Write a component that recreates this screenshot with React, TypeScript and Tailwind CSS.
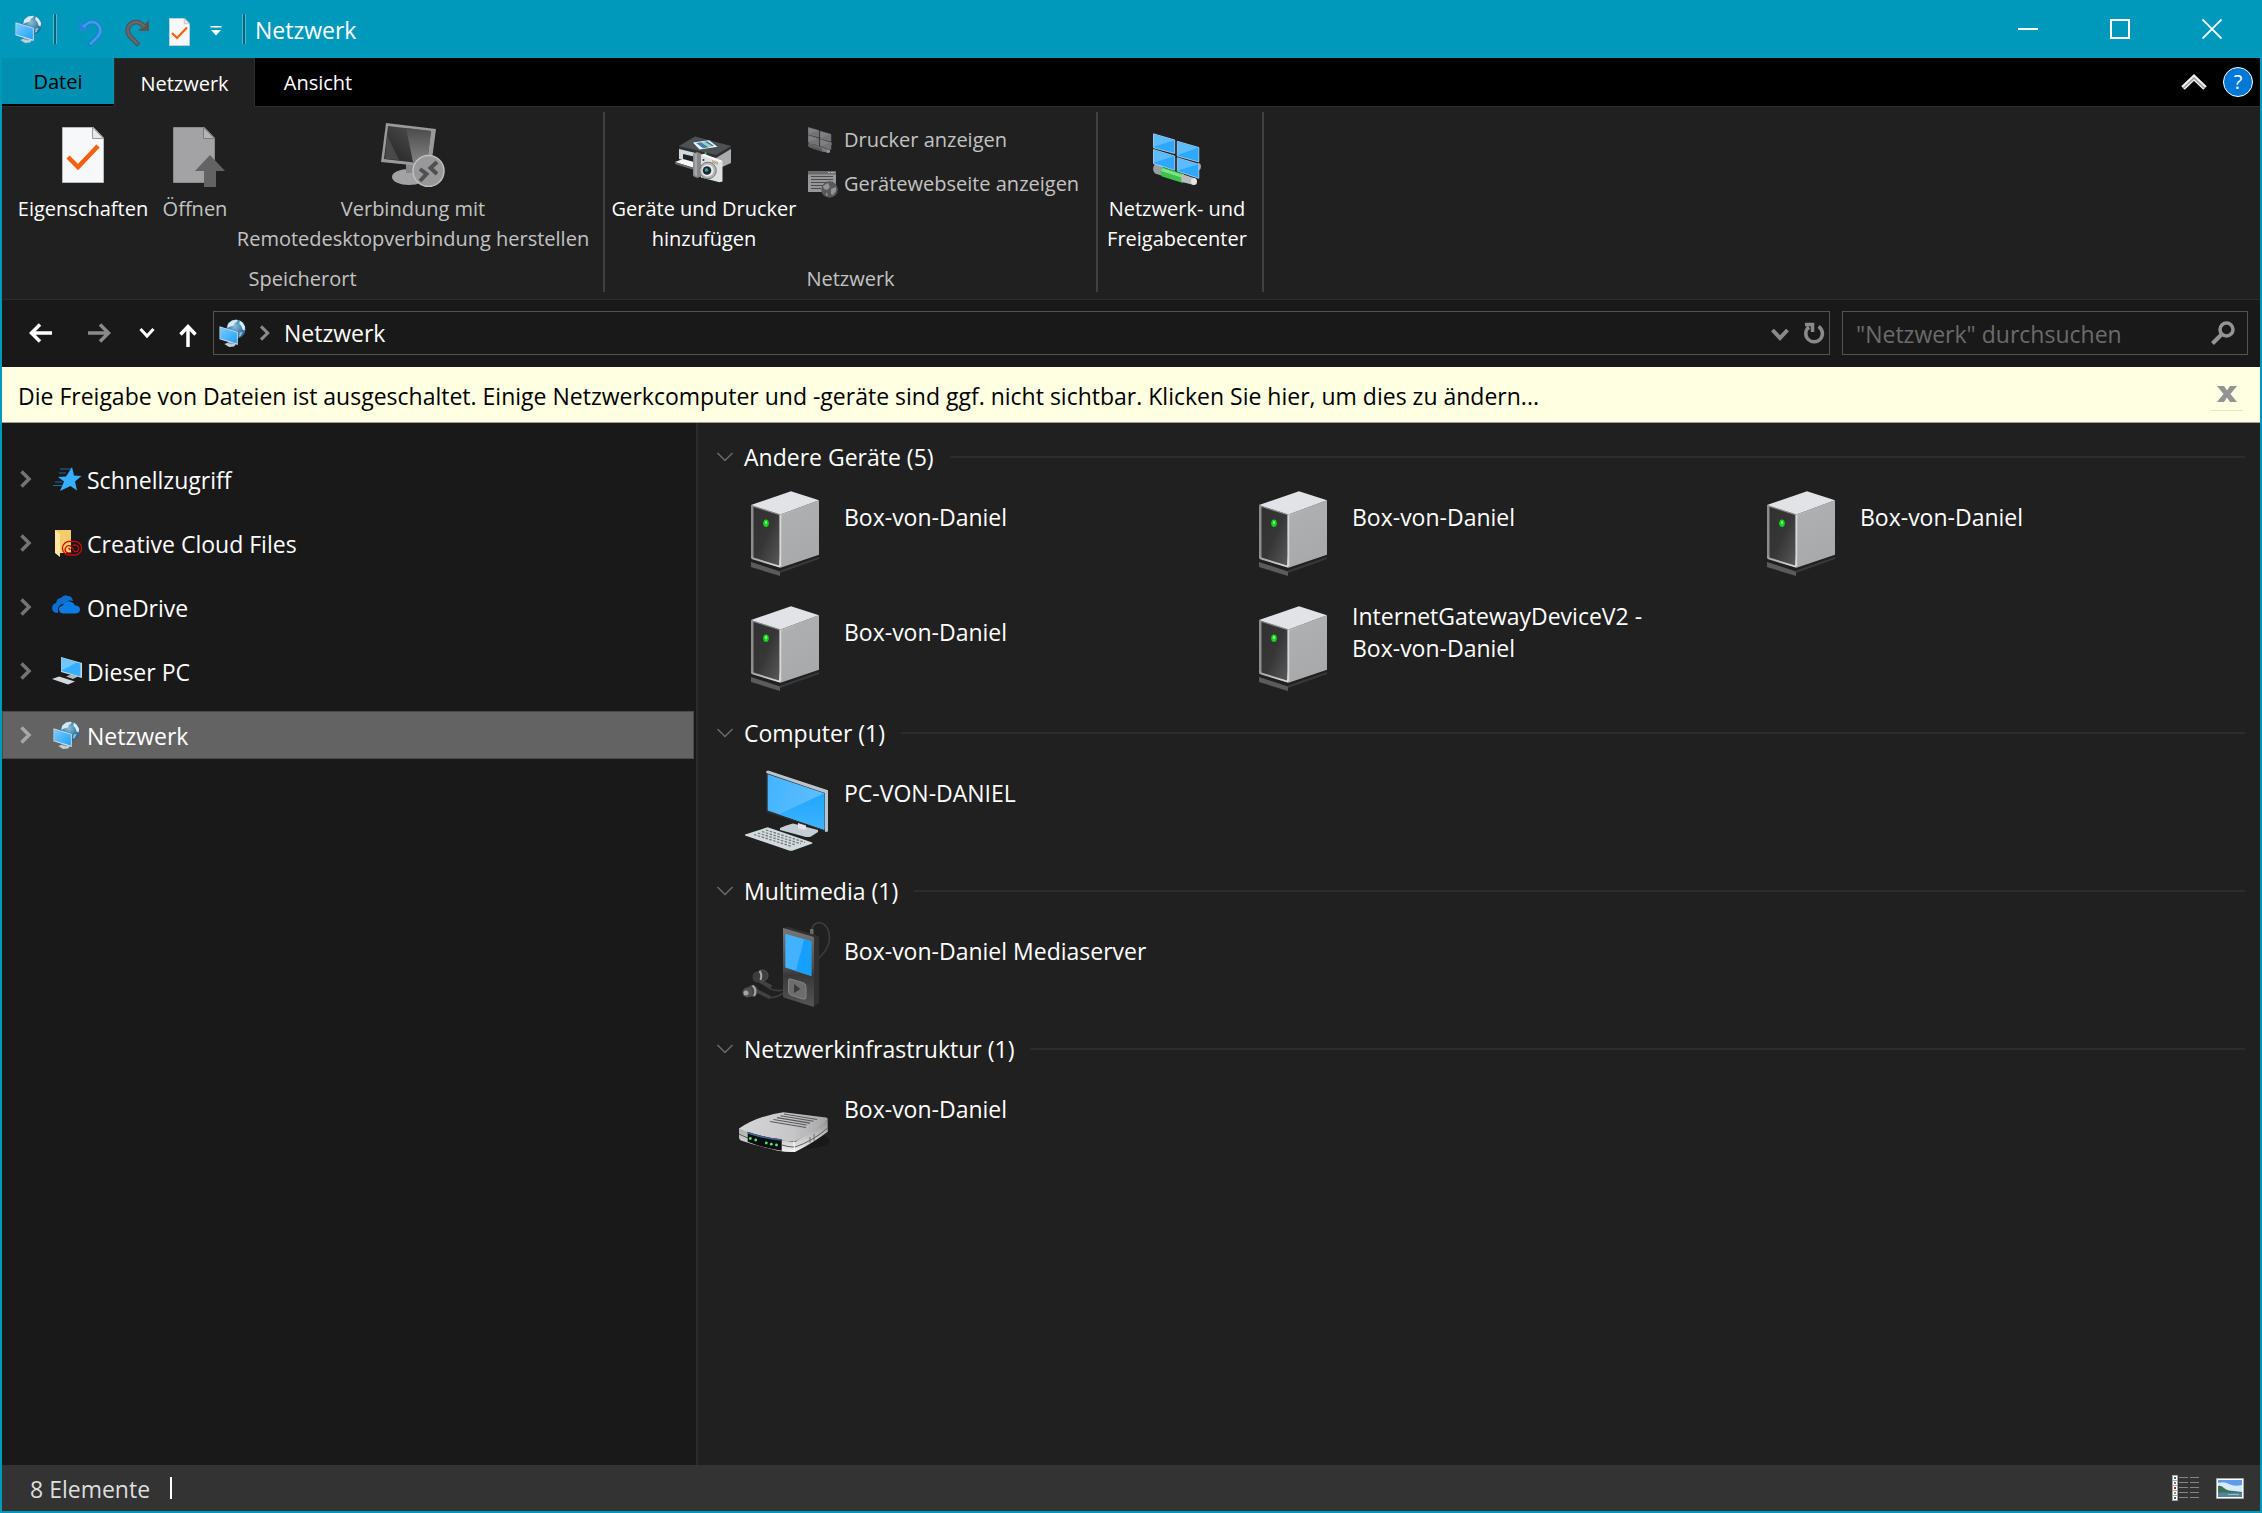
import React, { useState } from 'react';

type IconProps = { className?: string };

const NetworkIcon = ({ className = 'w-7 h-7' }: IconProps) => (
  <svg viewBox="0 0 28 29" className={className} aria-hidden="true">
    <defs>
      <radialGradient id="globe" cx="0.45" cy="0.35" r="0.7">
        <stop offset="0" stopColor="#8fbdd6" />
        <stop offset="0.5" stopColor="#4487ae" />
        <stop offset="1" stopColor="#1f5c85" />
      </radialGradient>
      <linearGradient id="netscreen" x1="0" y1="0" x2="1" y2="1">
        <stop offset="0" stopColor="#7fcbff" />
        <stop offset="1" stopColor="#1ba1ff" />
      </linearGradient>
    </defs>
    <circle cx="17" cy="10.500" r="10" fill="url(#globe)" />
    <path d="M9 5l4-3.500 5-.8 1 1.500-3 2-1 2.500-4 1-3 1.500z" fill="#d3e9f3" />
    <path d="M21 1.500l3 2.500 2.500 4-.5 4-2-1-1.500-4-2-2z" fill="#d9edf5" />
    <path d="M21 14l3-.5-2 4-2 1z" fill="#8fc0d9" />
    <path d="M5 26l5-2 7 2.500-2 2-5 .5z" fill="#c4d0d8" />
    <path d="M9 22l4 1.500v3l-4-1z" fill="#8e9ba4" />
    <path d="M0 7.500l19 6v13.500L0 21z" fill="#d4dde3" />
    <path d="M.7 8.500l17.300 5.500v11.500L.7 20.200z" fill="url(#netscreen)" />
  </svg>
);

const PageCheckIcon = ({ className }: IconProps) => (
  <svg viewBox="0 0 42 56" className={className} aria-hidden="true">
    <path d="M.5.5h31L41.500 11v44.500H.5z" fill="#f7f8f9" stroke="#b9b9b9" />
    <path d="M30.500.5V11.500H41.500z" fill="#e6e8ea" stroke="#9b9b9b" />
    <path d="M6 30l10 10L36 19" fill="none" stroke="#f4600c" strokeWidth="4.500" />
  </svg>
);

const UndoIcon = () => (
  <svg viewBox="0 0 24 28" className="w-6 h-7" aria-hidden="true">
    <path d="M4.500 8Q8.500 3 13 3a8.300 8.300 0 0 1 8.300 8.500q0 3.500-3 6.500L10.500 26" fill="none" stroke="#1f74cb" strokeWidth="4.600" />
    <path d="M0 1v11h11z" fill="#2583da" />
    <path d="M4.500 8Q8.500 3 13 3a8.300 8.300 0 0 1 8.300 8.500q0 3.500-3 6.500L11 25.500" fill="none" stroke="#3d9bea" strokeWidth="3" />
  </svg>
);

const RedoIcon = () => (
  <svg viewBox="0 0 24 28" className="w-6 h-7" aria-hidden="true">
    <path d="M19.500 8Q15.500 3 11 3a8.300 8.300 0 0 0-8.300 8.500q0 3.500 3 6.500l7.800 8" fill="none" stroke="#4a4a4a" strokeWidth="4.600" />
    <path d="M24 1v11H13z" fill="#555" />
    <path d="M19.500 8Q15.500 3 11 3a8.300 8.300 0 0 0-8.300 8.500q0 3.500 3 6.500l7.300 7.500" fill="none" stroke="#666" strokeWidth="3" />
  </svg>
);

const OpenIcon = () => (
  <svg viewBox="0 0 52 60" className="w-[52px] h-[60px]" aria-hidden="true">
    <path d="M.5.5h31L41.500 11v44.500H.5z" fill="#a3a3a5" stroke="#8a8a8a" />
    <path d="M30.500.5V11.500H41.500z" fill="#b4b4b4" stroke="#7c7c7c" />
    <path d="M37 28l15 16h-9v16H31V44h-9z" fill="#636363" />
  </svg>
);

const RemoteIcon = () => (
  <svg viewBox="0 0 64 64" className="w-16 h-16" aria-hidden="true">
    <defs>
      <linearGradient id="remote" x1="0" y1="1" x2="1" y2="0">
        <stop offset="0" stopColor="#222" />
        <stop offset="1" stopColor="#555" />
      </linearGradient>
      <linearGradient id="remoteglare" x1="0" y1="0" x2="0" y2="1">
        <stop offset="0" stopColor="#4b4b4b" />
        <stop offset="1" stopColor="#858587" />
      </linearGradient>
    </defs>
    <ellipse cx="28" cy="54" rx="17" ry="8" fill="#a2a2a4" />
    <path d="M25 40h11l-2 10H25z" fill="#88888a" />
    <path d="M5 0l50 6-5 38L0 39z" fill="#9a9a9c" />
    <path d="M7 3l43 5-4 33L3 36z" fill="url(#remote)" />
    <path d="M25 5l25 3-4 33-14-2z" fill="url(#remoteglare)" />
    <path d="M6 12l12 25-14-1z" fill="#4a4a4a" />
    <circle cx="47.500" cy="48" r="15.500" fill="#98989a" stroke="#c0c0c0" strokeWidth="1.500" />
    <path d="M39 46l6.500 5-6.500 7M56 39l-6.500 6 6.500 6" fill="none" stroke="#505050" strokeWidth="4" />
  </svg>
);

const PrinterCameraIcon = () => (
  <svg viewBox="0 0 58 47" className="w-[58px] h-[47px]" aria-hidden="true">
    <path d="M4 10l37 9v12L4 23z" fill="#d5d7d9" />
    <path d="M40.500 19L56 10v17l-15.500 7z" fill="#aaacae" />
    <path d="M4 10L20 .5 56 10v3l-15 9L4 13z" fill="#2d3134" />
    <path d="M4 10L20 .5 56 10l-15 9z" fill="#4b5155" />
    <path d="M18 6.500l16-2.300 8.500 6.500-18 2.800z" fill="#f0f6fb" />
    <path d="M21 7l5-.8 8 5-6 1zM29 5.800l3.500-.5 6.500 4.500-2 .5z" fill="#3f7fb8" />
    <path d="M26 6.200l3-.4 8 4.600-3 .8z" fill="#9fd0a0" />
    <path d="M8 18l11 2.500v9L8 26z" fill="#1f2327" />
    <path d="M0 26l8-3 11 3v6z" fill="#f4f6f7" />
    <path d="M0 26l19 6v2L0 28z" fill="#686c70" />
    <path d="M29.500 16.500h2v5h-2z" fill="#3fca45" />
    <path d="M18 18l4-2 4 1.500v23l-4 1.500-4-2z" fill="#85878a" />
    <path d="M19.500 18l2.500-1v23l-2.500-1z" fill="#a5a7aa" />
    <path d="M26 19l3-1 18.500 7v20.500l-3 .8L26 41.500z" fill="#dfe0e1" />
    <path d="M26 19l3-1 18.500 7-2.500 1z" fill="#fafafa" />
    <path d="M37 24l6 2v3l-6-2z" fill="#bcb397" />
    <circle cx="28.500" cy="24" r="1" fill="#333" />
    <circle cx="33" cy="34.500" r="8.300" fill="#b4b6b8" stroke="#74777a" />
    <circle cx="32.500" cy="34.500" r="6" fill="#ebecec" />
    <circle cx="32" cy="34.500" r="4.300" fill="#20282b" />
    <circle cx="31.500" cy="34" r="1.800" fill="#38a4a2" />
  </svg>
);

const PanesIcon = ({ className, muted }: IconProps & { muted?: boolean }) => (
  <svg viewBox="0 0 48 52" className={className} aria-hidden="true">
    <path d="M2 31l8 2v10l-8-2.500q-4-5 0-9.500z" fill={muted ? '#636365' : '#9c9fa1'} />
    <path d="M45 30q3 0 3 3.500t-3 4z" fill={muted ? '#636365' : '#9c9fa1'} />
    <path d="M9 34l22 7-1 9L9 43.500q-3-5 0-9.500z" fill={muted ? '#59595b' : '#3fc24d'} />
    <path d="M9 35l21 7v3L8 38z" fill={muted ? '#6b6b6d' : '#7be388'} />
    <path d="M29 41l12 4v7l-12-3q-2-4 0-8z" fill={muted ? '#7a7a7c' : '#b9bdbe'} />
    <ellipse cx="41" cy="48.500" rx="3" ry="3.500" fill={muted ? '#9a9a9c' : '#e3e5e6'} />
    <g fill={muted ? '#737375' : '#2ea8ff'} stroke={muted ? '#909092' : '#b5dcf8'} strokeWidth=".8">
      <path d="M.5.800l21.200 6.200v13.500L.5 14.800z" />
      <path d="M24.300 8.300l21.500 6.200v14.500l-21.500-6z" />
      <path d="M.5 16.500l21.200 6.500v14.300L.5 30.700z" />
      <path d="M24.300 24.700l21.500 6.600v14l-21.500-7.300z" />
    </g>
    <path d="M1 1.500l20 6L1 13.500zM25 9l19 6-19 7zM1 17.500l19 6-19 6zM25 25.500l19 6-19 6z" fill={muted ? '#808082' : '#5cbcff'} />
  </svg>
);

const WebpageIcon = () => (
  <svg viewBox="0 0 30 27" className="w-[30px] h-[27px]" aria-hidden="true">
    <path d="M0 0h28v21H0z" fill="#97979a" />
    <path d="M0 0h28v3.500H0z" fill="#6a6a6c" />
    <path d="M20 1.500h2M23 1.500h2M25.500 1.500h1.500" stroke="#bbb" />
    <path d="M3 5.500h22M3 8.500h22M3 11.500h22M3 14.500h14M3 17.500h10" stroke="#4a4a4c" strokeWidth="1.200" />
    <circle cx="21.500" cy="18.500" r="8.300" fill="#59595b" />
    <path d="M15 15l5-3 2 4-3 3-3-1zM23 18l5-2v4l-3 4-2-1zM18 21l2 3-2 1z" fill="#949496" />
  </svg>
);

const Chevron = ({ className = 'w-3 h-[18px]' }: IconProps) => (
  <svg viewBox="0 0 12 18" className={className} fill="none" stroke="currentColor" strokeWidth="3.500" aria-hidden="true">
    <path d="M1.500 1.500L9 9l-7.500 7.500" />
  </svg>
);

const StarIcon = () => (
  <svg viewBox="0 0 30 28" className="w-[30px] h-7" aria-hidden="true">
    <path d="M20 2l2 8.500 7.500.5-6.500 5.500 2 9-6.500-4.500L8 26l4-9.500-6-4.500 8-.5z" fill="#35aeff" />
    <path d="M8 4h11M7 8h7M3 17h7M1 20.500h9" stroke="#1f6d9f" strokeWidth="1.200" />
  </svg>
);

const CreativeCloudIcon = () => (
  <svg viewBox="0 0 30 28" className="w-[30px] h-7" aria-hidden="true">
    <path d="M3 1h16v23H6z" fill="#f5cc6b" />
    <path d="M3 1l5 4v23l-5-4z" fill="#ffe5a0" />
    <path d="M18 12.500a6.800 6.800 0 1 0 0 13.500h4a6.800 6.800 0 1 0 0-13.500z" fill="none" stroke="#c90b0b" strokeWidth="1.300" />
    <path d="M19.500 23.500c-5 1.500-7.500-1.500-6-4.500s5-3 6.500-.5l2.500 4c3 1 4.500-1.500 4-4-1-2.500-3.500-3-6-2M18.500 21l-2-2" fill="none" stroke="#c90b0b" strokeWidth="1.300" />
  </svg>
);

const OneDriveIcon = () => (
  <svg viewBox="0 0 30 28" className="w-[30px] h-7" aria-hidden="true">
    <path d="M6 20q-6 0-6-5 0-4 4-5 1-5 5-5 3-4 7-2 4 0 5 5-6-2-9 3-5 0-6 5z" fill="#0a6fd0" />
    <path d="M11 20.500q-4-.5-4-4t4-4q2-5 7-4 4 1 5 4 5 0 5 4 0 3.500-4 4z" fill="#0a7ce4" />
  </svg>
);

const ThisPcIcon = () => (
  <svg viewBox="0 0 30 28" className="w-[30px] h-7" aria-hidden="true">
    <path d="M9 0l21 6v15L9 15z" fill="#cdd7de" />
    <path d="M9.700 1L28.500 6.500V19.500L9.700 14z" fill="#35aeff" />
    <path d="M9.700 1l15 4.500-15 8z" fill="#70c6ff" />
    <path d="M14 19.500l5-2 7 2-5 2.500z" fill="#aebbc3" />
    <path d="M0 22l7-2.500 16 5-7 3z" fill="#d3dadf" />
  </svg>
);

const ServerIcon = () => (
  <svg viewBox="0 0 96 100" className="w-24 h-[100px]" aria-hidden="true">
    <defs>
      <linearGradient id="serverFront" x1="0" y1="0" x2="1" y2="1">
        <stop offset="0" stopColor="#303030" />
        <stop offset="0.5" stopColor="#363636" />
        <stop offset="1" stopColor="#585858" />
      </linearGradient>
      <linearGradient id="serverSide" x1="0" y1="0" x2="0.300" y2="1">
        <stop offset="0" stopColor="#d6d7d9" />
        <stop offset="0.250" stopColor="#aeafb1" />
        <stop offset="1" stopColor="#a8a9ab" />
      </linearGradient>
      <linearGradient id="serverEdge" x1="0" y1="0" x2="0" y2="1">
        <stop offset="0" stopColor="#8b8b8d" />
        <stop offset="0.800" stopColor="#8d8d8f" />
        <stop offset="1" stopColor="#e8e8e8" />
      </linearGradient>
    </defs>
    <path d="M14 83l29 9.500V97L14 88z" fill="#5b5b5b" />
    <path d="M43 91.500L82 78v2L43 94z" fill="#383838" />
    <path d="M14 26l29.500 9.500v53.200L16 80.500q-2-.5-2-2z" fill="url(#serverEdge)" />
    <path d="M16.500 28L42 36v50.500l-25.500-8z" fill="url(#serverFront)" />
    <path d="M43.500 35.500L82 21.300v54.400L43.500 88.700z" fill="url(#serverSide)" />
    <path d="M14 26l40-13.700 28 9L43.500 35.500z" fill="#e2e3e7" />
    <path d="M43.500 35.500v52" stroke="#d8d8d8" strokeWidth="1.500" />
    <ellipse cx="29" cy="44.300" rx="2.800" ry="3.800" fill="#12d51c" />
    <ellipse cx="29" cy="43.500" rx="1.200" ry="1.800" fill="#74ff6b" />
  </svg>
);

const ComputerIcon = () => (
  <svg viewBox="0 0 96 100" className="w-24 h-[100px]" aria-hidden="true">
    <defs>
      <linearGradient id="pcScreen" x1="0" y1="0" x2="1" y2="0.300">
        <stop offset="0" stopColor="#43b3ff" />
        <stop offset="1" stopColor="#5dbeff" />
      </linearGradient>
      <linearGradient id="pcShade" x1="0" y1="0" x2="0" y2="1">
        <stop offset="0" stopColor="#1ea7ff" />
        <stop offset="1" stopColor="#3db3ff" />
      </linearGradient>
    </defs>
    <path d="M43 73q6-3 13-4.500l25 6.500v2l-7 4.500q-3 1-7 0L43 75z" fill="#c5ced4" />
    <path d="M61 68l8 2.500v4q-4 1-8-1.500z" fill="#e6e3e6" />
    <path d="M29.300 16.300L31 15.800 91 35.500v41l-3.500-.5L29.300 57z" fill="#2b3136" />
    <path d="M29.300 16.300L31 15.600 91 35.300v41.200l-3 .5V38L29.300 18z" fill="#b9c4cb" />
    <path d="M30.700 19.300l56.600 18.900v36.500L30.700 55.500z" fill="url(#pcScreen)" />
    <path d="M87.300 38.200v36.500L42 59.300z" fill="url(#pcShade)" />
    <path d="M8 79.500l22.700-7.200L75.300 87.500v1L56 95.500q-2 .5-4 0L8 80.500z" fill="#d3dade" />
    <path d="M17 79.500l38 12M21 78l38 12M25 76.500l39 12.300M29 75l39 12.300" stroke="#6d767c" strokeWidth="1.200" strokeDasharray="2.500 1.500" />
  </svg>
);

const MediaIcon = () => (
  <svg viewBox="0 0 96 100" className="w-24 h-[100px]" aria-hidden="true">
    <defs>
      <linearGradient id="playerBody" x1="0" y1="0" x2="0" y2="1">
        <stop offset="0" stopColor="#777" />
        <stop offset="0.500" stopColor="#4d4d4d" />
        <stop offset="0.600" stopColor="#383838" />
        <stop offset="1" stopColor="#555" />
      </linearGradient>
    </defs>
    <path d="M74.500 17q2-7.500 8-7.500 9.500 2 10 15 0 11-11 21M46 77q-7 2-14-2L20 67M46 80q-8 6-15 4L17 77" fill="none" stroke="#3d3d3d" strokeWidth="1.600" />
    <path d="M19 66l14 7M18 77l14 7" stroke="#424242" strokeWidth="3.500" strokeLinecap="round" />
    <path d="M73 16h3.500v8H73z" fill="#6a6a6a" />
    <path d="M46 15l5-1.300 29 8.800q2 1 2 3V90l-5 3.500z" fill="#303030" />
    <path d="M46 15l29.500 8.500q1.500.5 1.500 2V93q0 1-1.500.5L48 85q-2-.5-2-2z" fill="url(#playerBody)" />
    <path d="M48.300 20.700l26 7.600V63l-26-8.500z" fill="#42b1ff" />
    <path d="M74.300 28.300V63L59 58l8-31.800z" fill="#159fff" />
    <path d="M53.500 66l12 3.500q3.500 1 3.500 4V84q0 3-3 2l-11-3.500q-3.500-1-3.500-4V68q0-3 2-2z" fill="#6d6d6d" stroke="#858585" />
    <path d="M57 71l6.500 5-6.500 4z" fill="#3a3a3a" />
    <circle cx="25.500" cy="62.500" r="5.500" fill="#3e3e3e" stroke="#555" />
    <ellipse cx="20" cy="64" rx="4.500" ry="5.500" fill="#3c3c3c" />
    <path d="M22.500 58q3 3.500 1 9" fill="none" stroke="#aaa" strokeWidth="2" />
    <ellipse cx="15.500" cy="78" rx="5.500" ry="6" fill="#464646" />
    <path d="M15.500 72.500q5 4 1.500 10.500" fill="none" stroke="#aaa" strokeWidth="2" />
    <circle cx="10.500" cy="79.500" r="5" fill="#505050" />
    <circle cx="9" cy="80" r="2.500" fill="#a5a5a5" />
  </svg>
);

const RouterIcon = () => (
  <svg viewBox="0 0 96 100" className="w-24 h-[100px]" aria-hidden="true">
    <defs>
      <linearGradient id="routerTop" x1="0" y1="0" x2="1" y2="0">
        <stop offset="0" stopColor="#d6d6d8" />
        <stop offset="0.600" stopColor="#c6c6c8" />
        <stop offset="1" stopColor="#a5a5a7" />
      </linearGradient>
      <linearGradient id="routerSide" x1="0" y1="0" x2="0" y2="1">
        <stop offset="0" stopColor="#8f8f91" />
        <stop offset="1" stopColor="#f0f0f0" />
      </linearGradient>
    </defs>
    <ellipse cx="62" cy="70" rx="31" ry="8" fill="#181818" />
    <path d="M2 57q27 12 56 14l32.700-22.500v12.200Q76 72 58 81q-8 .5-18-1.500Q20 75 4 69.500q-2-1-2-3z" fill="url(#routerSide)" />
    <path d="M2 57.500Q20 45 46.300 41.300L89 46.500q2 .5 1.700 2Q76 62 58 70.500 26 70 2 57.500z" fill="url(#routerTop)" />
    <path d="M57 70.500v10" stroke="#f5f5f5" strokeWidth="1.500" />
    <path d="M58 76q18-6 32.500-19M2 63q4 2 9 4M45 74q6 2 12 2" fill="none" stroke="#59595b" />
    <path d="M10.700 60.700q16 6 34 7.500v11.500q-18-2.500-34-9z" fill="#0a0d12" />
    <path d="M10.700 60.700q16 6 34 7.500v1.500q-18-1.500-34-7z" fill="#42618d" />
    <path d="M47 43l33 5.500M43.500 44.800l33 5.500M40 46.600l33 5.500M36.500 48.500l33 5.500M33 50.500l36 6" stroke="#58585a" strokeWidth="1.100" />
    <g fill="#52e864">
      <circle cx="13.300" cy="67.500" r="1.400" />
      <circle cx="18.700" cy="69" r="1.400" />
      <circle cx="29.300" cy="72" r="1.400" />
      <circle cx="34.300" cy="73.200" r="1.400" />
      <circle cx="39.500" cy="74" r="1.400" />
    </g>
    <path d="M73 66v6M77 63v7" stroke="#6d6d6f" />
  </svg>
);

type RibbonButtonProps = {
  icon: React.ReactNode;
  lines: string[];
  className: string;
  disabled?: boolean;
};

const RibbonButton = ({ icon, lines, className, disabled }: RibbonButtonProps) => (
  <button
    type="button"
    disabled={disabled}
    className={`flex flex-col items-center whitespace-nowrap text-[20px] leading-[30px] ${disabled ? 'text-[#c3c3c3]' : 'text-white'} ${className}`}
  >
    <span className="flex h-[82px] items-center justify-center pt-1">{icon}</span>
    {lines.map((line) => (
      <span key={line} className="block">{line}</span>
    ))}
  </button>
);

const RibbonGroup = ({ label, children }: { label: string; children: React.ReactNode }) => (
  <div className="flex flex-col border-r-2 border-[#404040]">
    <div className="flex flex-1">{children}</div>
    <div className="h-[26px] text-center text-[20px] leading-[26px] text-[#c3c3c3]">{label}</div>
  </div>
);

const navItems = [
  { label: 'Schnellzugriff', icon: <StarIcon /> },
  { label: 'Creative Cloud Files', icon: <CreativeCloudIcon /> },
  { label: 'OneDrive', icon: <OneDriveIcon /> },
  { label: 'Dieser PC', icon: <ThisPcIcon /> },
  { label: 'Netzwerk', icon: <NetworkIcon className="w-[30px] h-7" /> }
];

const groups = [
  {
    title: 'Andere Geräte',
    icon: <ServerIcon />,
    items: [
      ['Box-von-Daniel'],
      ['Box-von-Daniel'],
      ['Box-von-Daniel'],
      ['Box-von-Daniel'],
      ['InternetGatewayDeviceV2 -', 'Box-von-Daniel']
    ]
  },
  { title: 'Computer', icon: <ComputerIcon />, items: [['PC-VON-DANIEL']] },
  { title: 'Multimedia', icon: <MediaIcon />, items: [['Box-von-Daniel Mediaserver']] },
  { title: 'Netzwerkinfrastruktur', icon: <RouterIcon />, items: [['Box-von-Daniel']] }
];

const TitleBar = () => (
  <header className="flex h-[58px] items-center bg-[#0099bc] pl-[13px] text-white">
    <NetworkIcon />
    <div className="ml-[10px] h-[30px] w-1 border-x border-[#4fb8d0] bg-[#08667c]"></div>
    <button type="button" aria-label="Rückgängig" className="ml-[22px] pt-2"><UndoIcon /></button>
    <button type="button" aria-label="Wiederholen" className="ml-[22px] pt-2"><RedoIcon /></button>
    <button type="button" aria-label="Eigenschaften" className="ml-5 pt-[6px]"><PageCheckIcon className="h-7 w-[21px]" /></button>
    <button type="button" aria-label="Symbolleiste anpassen" className="ml-5 pt-1">
      <svg viewBox="0 0 12 10" className="h-[10px] w-3" aria-hidden="true">
        <path d="M.5 0h11v1.500H.5zM1 4h10L6 9.500z" fill="#fff" />
      </svg>
    </button>
    <div className="ml-5 h-[30px] w-1 border-x border-[#4fb8d0] bg-[#08667c]"></div>
    <h1 className="ml-[9px] pt-[2px] text-[23px] leading-8">Netzwerk</h1>
    <div className="ml-auto flex h-full pr-[2px]">
      <button type="button" aria-label="Minimieren" className="flex w-[92px] items-center justify-center">
        <span className="block h-[2px] w-5 bg-white"></span>
      </button>
      <button type="button" aria-label="Maximieren" className="flex w-[92px] items-center justify-center">
        <span className="block h-5 w-5 border-2 border-white"></span>
      </button>
      <button type="button" aria-label="Schließen" className="flex w-[92px] items-center justify-center">
        <svg viewBox="0 0 20 20" className="h-5 w-5" aria-hidden="true">
          <path d="M.5.5l19 19M19.500.5l-19 19" stroke="#fff" strokeWidth="1.800" />
        </svg>
      </button>
    </div>
  </header>
);

const Tabs = () => (
  <nav className="flex h-[49px] border-b border-[#2d2d2d] bg-black text-[20px] leading-[30px]">
    <button type="button" className="h-[46px] w-28 bg-[#0090b2] pt-[2px] text-black">Datei</button>
    <button type="button" className="-mb-px w-[141px] border-x border-t border-[#2d2d2d] bg-[#202020] pt-px text-white">Netzwerk</button>
    <button type="button" className="w-[126px] pt-[2px] text-white">Ansicht</button>
    <div className="ml-auto flex items-center pr-[7px]">
      <button type="button" aria-label="Menüband minimieren">
        <svg viewBox="0 0 26 16" className="h-4 w-[26px]" fill="none" aria-hidden="true">
          <path d="M2 14L13 3.500 24 14" stroke="#f2f2f2" strokeWidth="5" />
          <path d="M2.500 14L13 4l10.500 10" stroke="#9a9a9a" strokeWidth="1.500" />
        </svg>
      </button>
      <button type="button" aria-label="Hilfe" className="ml-4 flex h-[30px] w-[30px] items-center justify-center rounded-full border border-white bg-[#0078d7] text-[20px] leading-6 text-white">
        ?
      </button>
    </div>
  </nav>
);

const Ribbon = () => (
  <section className="flex h-[193px] border-b border-[#2d2d2d] bg-[#202020] pt-[5px] pb-[7px]">
    <RibbonGroup label="Speicherort">
      <div className="flex pl-[6px] pr-[9px]">
        <RibbonButton className="w-[150px]" icon={<PageCheckIcon className="h-14 w-[42px]" />} lines={['Eigenschaften']} />
        <RibbonButton className="w-[74px]" icon={<span className="pt-1 pl-2"><OpenIcon /></span>} lines={['Öffnen']} disabled />
        <RibbonButton className="w-[362px]" icon={<RemoteIcon />} lines={['Verbindung mit', 'Remotedesktopverbindung herstellen']} disabled />
      </div>
    </RibbonGroup>
    <RibbonGroup label="Netzwerk">
      <div className="flex w-[491px] pl-1">
        <RibbonButton className="w-[190px]" icon={<span className="pt-2"><PrinterCameraIcon /></span>} lines={['Geräte und Drucker', 'hinzufügen']} />
        <div className="flex flex-col gap-[14px] pt-[13px] pl-[9px] text-[20px] leading-[30px] text-[#c3c3c3]">
          <button type="button" disabled className="flex items-center gap-[6px]">
            <span className="w-[30px]"><PanesIcon muted className="h-[26px] w-6" /></span>
            Drucker anzeigen
          </button>
          <button type="button" disabled className="flex items-center gap-[6px]">
            <WebpageIcon />
            Gerätewebseite anzeigen
          </button>
        </div>
      </div>
    </RibbonGroup>
    <RibbonGroup label="">
      <div className="w-[164px]">
        <RibbonButton className="w-[158px]" icon={<span className="pt-2"><PanesIcon className="h-[52px] w-12" /></span>} lines={['Netzwerk- und', 'Freigabecenter']} />
      </div>
    </RibbonGroup>
  </section>
);

const AddressBar = () => (
  <div className="flex h-[67px] items-center bg-[#191919] pr-3 pb-px text-white">
    <button type="button" aria-label="Zurück" className="ml-[27px]">
      <svg viewBox="0 0 23 20" className="h-5 w-[23px]" fill="none" stroke="#fff" strokeWidth="3.500" aria-hidden="true">
        <path d="M23 10H3M11 1.500L2.500 10l8.500 8.500" />
      </svg>
    </button>
    <button type="button" disabled aria-label="Vorwärts" className="ml-9">
      <svg viewBox="0 0 23 20" className="h-5 w-[23px]" fill="none" stroke="#8a8a8a" strokeWidth="3.500" aria-hidden="true">
        <path d="M0 10h20M12 1.500l8.500 8.500-8.500 8.500" />
      </svg>
    </button>
    <button type="button" aria-label="Zuletzt besucht" className="ml-7">
      <svg viewBox="0 0 16 12" className="h-3 w-4" fill="none" stroke="#fff" strokeWidth="3" aria-hidden="true">
        <path d="M1.500 2L8 9l6.500-7" />
      </svg>
    </button>
    <button type="button" aria-label="Nach oben" className="ml-6 pt-1">
      <svg viewBox="0 0 18 24" className="h-6 w-[18px]" fill="none" stroke="#fff" strokeWidth="3.500" aria-hidden="true">
        <path d="M9 24V4M1.500 11.500L9 3.500l7.500 8" />
      </svg>
    </button>
    <div className="ml-4 flex h-11 flex-1 items-center border border-[#535353] pl-[5px]">
      <NetworkIcon />
      <span className="ml-3 text-[#8a8a8a]"><Chevron className="h-4 w-3" /></span>
      <a href="#netzwerk" className="ml-[13px] text-[23px] leading-8">Netzwerk</a>
      <button type="button" aria-label="Vorherige Orte" className="ml-auto pt-1">
        <svg viewBox="0 0 18 14" className="h-[14px] w-[18px]" fill="none" stroke="#8a8a8a" strokeWidth="4" aria-hidden="true">
          <path d="M1.500 2L9 10l7.500-8" />
        </svg>
      </button>
      <button type="button" aria-label="Aktualisieren" className="mr-1 ml-[14px]">
        <svg viewBox="0 0 22 24" className="h-6 w-[22px]" fill="none" stroke="#8a8a8a" strokeWidth="3.500" aria-hidden="true">
          <path d="M15.500 5.500a8.300 8.300 0 1 1-9.500.5M2 3.500h7.500V11" />
        </svg>
      </button>
    </div>
    <label className="ml-3 flex h-11 w-[406px] items-center border border-[#535353] pr-3 pl-[13px]">
      <input
        type="text"
        aria-label="Netzwerk durchsuchen"
        placeholder={'"Netzwerk" durchsuchen'}
        className="min-w-0 flex-1 bg-transparent pt-[2px] text-[23px] leading-8 text-white outline-none placeholder:text-[#6b6b6b]"
      />
      <svg viewBox="0 0 24 24" className="h-6 w-6" fill="none" stroke="#949494" aria-hidden="true">
        <circle cx="15.500" cy="8.500" r="6.500" strokeWidth="3.500" />
        <path d="M11 13L1.500 22.500" strokeWidth="4" />
      </svg>
    </label>
  </div>
);

const Sidebar = ({ selected, onSelect }: { selected: string; onSelect: (label: string) => void }) => (
  <aside className="w-[696px] border-r-2 border-[#2b2b2b] bg-[#191919] pt-8 pr-[2px]">
    <ul className="flex flex-col gap-4">
      {navItems.map((item) => (
        <li key={item.label}>
          <button
            type="button"
            onClick={() => onSelect(item.label)}
            className={`flex h-12 w-full items-center border pl-[17px] text-[23px] leading-8 text-white ${
              item.label === selected ? 'border-[#4a4a4a] bg-[#636363]' : 'border-transparent'
            }`}
          >
            <span className={item.label === selected ? 'text-[#a8a8a8]' : 'text-[#747474]'}><Chevron /></span>
            <span className="ml-5">{item.icon}</span>
            <span className="ml-[5px] pt-[2px]">{item.label}</span>
          </button>
        </li>
      ))}
    </ul>
  </aside>
);

const DeviceGroups = () => (
  <main className="flex-1 bg-[#202020] pt-3 text-[23px] leading-8 text-white">
    {groups.map((group) => (
      <section key={group.title} className="pl-[19px]">
        <div className="flex h-11 items-center pr-[15px]">
          <svg viewBox="0 0 16 10" className="h-[10px] w-4" fill="none" stroke="#6b6b6b" strokeWidth="1.500" aria-hidden="true">
            <path d="M.5 1L8 8.500 15.500 1" />
          </svg>
          <h2 className="ml-[11px]">{group.title} ({group.items.length})</h2>
          <div className="ml-4 h-[2px] flex-1 bg-[#2d2d2d]"></div>
        </div>
        <ul className="grid grid-cols-[repeat(auto-fill,496px)] gap-x-3 gap-y-px pl-5">
          {group.items.map((lines, i) => (
            <li key={i} className={`flex items-start ${lines.length > 1 ? 'min-h-[117px]' : 'min-h-[114px]'}`}>
              {group.icon}
              <div className="ml-[11px] flex h-19 flex-col justify-center">
                {lines.map((line) => (
                  <span key={line}>{line}</span>
                ))}
              </div>
            </li>
          ))}
        </ul>
      </section>
    ))}
  </main>
);

const StatusBar = () => (
  <footer className="flex h-[46px] items-center bg-[#333] pr-4 pl-7 text-[#dedede]">
    <span className="pt-[2px] text-[23px] leading-8">8 Elemente</span>
    <span className="ml-5 h-[22px] w-[2px] bg-white"></span>
    <button type="button" aria-label="Details" className="ml-auto">
      <svg viewBox="0 0 28 26" className="h-[26px] w-7" aria-hidden="true">
        <path d="M0 0h6v26H0z" fill="#a5a5a5" />
        <path d="M1 1h4v4H1zM1 6h4v4H1zM1 11h4v4H1zM1 16h4v4H1zM1 21h4v4H1z" fill="#fff" />
        <path d="M2 2h2v2H2zM2 22h2v2H2z" fill="#35708f" />
        <path d="M2 7h2v2H2z" fill="#80708f" />
        <path d="M2 12h2v2H2z" fill="#c02a15" />
        <path d="M2 17h2v2H2z" fill="#8d9a5a" />
        <path d="M7 2.500h9M18 2.500h9M7 7.500h9M18 7.500h9M7 12.500h9M18 12.500h9M7 17.500h9M18 17.500h9M7 22.500h9M18 22.500h9" stroke="#858585" />
      </svg>
    </button>
    <button type="button" aria-label="Große Symbole" className="ml-4">
      <svg viewBox="0 0 28 21" className="h-[21px] w-7" aria-hidden="true">
        <path d="M.5.5h27v20H.5z" fill="#fff" stroke="#a8a8a8" />
        <path d="M2 2h24v17H2z" fill="#5c9bee" />
        <path d="M2 5q6-2 11 1t13 1v8H2z" fill="#d5ebfb" />
        <path d="M2 8q3-1 6 2t10 3l8 1v1H2z" fill="#3d7050" />
        <path d="M2 14.500h24V19H2z" fill="#52839f" />
        <path d="M12 16.500h11" stroke="#9dbccb" />
      </svg>
    </button>
  </footer>
);

const App = () => {
  const [selected, setSelected] = useState('Netzwerk');
  const [showNotice, setShowNotice] = useState(true);

  return (
    <div className="flex min-h-screen flex-col border-x-2 border-b-2 border-[#0099bc] bg-[#202020] font-['Open_Sans','Noto_Sans',sans-serif]">
      <TitleBar />
      <Tabs />
      <Ribbon />
      <AddressBar />
      {showNotice && (
        <div className="flex h-14 items-center border-b border-[#a0a0a0] bg-[#ffffe1] pr-[17px] pl-4 text-black">
          <p className="pt-[2px] text-[23px] leading-8">
            Die Freigabe von Dateien ist ausgeschaltet. Einige Netzwerkcomputer und -geräte sind ggf. nicht sichtbar. Klicken Sie hier, um dies zu ändern...
          </p>
          <button
            type="button"
            aria-label="Hinweis schließen"
            onClick={() => setShowNotice(false)}
            className="ml-auto flex h-8 w-8 items-center justify-center border-b border-[#e3e3c8]"
          >
            <svg viewBox="0 0 20 16" className="h-4 w-5" aria-hidden="true">
              <path d="M0 0h7l3 4.500L13 0h7l-6.500 8 6.500 8h-7l-3-4.500L7 16H0l6.500-8z" fill="#949494" />
            </svg>
          </button>
        </div>
      )}
      <div className="flex flex-1">
        <Sidebar selected={selected} onSelect={setSelected} />
        <DeviceGroups />
      </div>
      <StatusBar />
    </div>
  );
};

export default App;
